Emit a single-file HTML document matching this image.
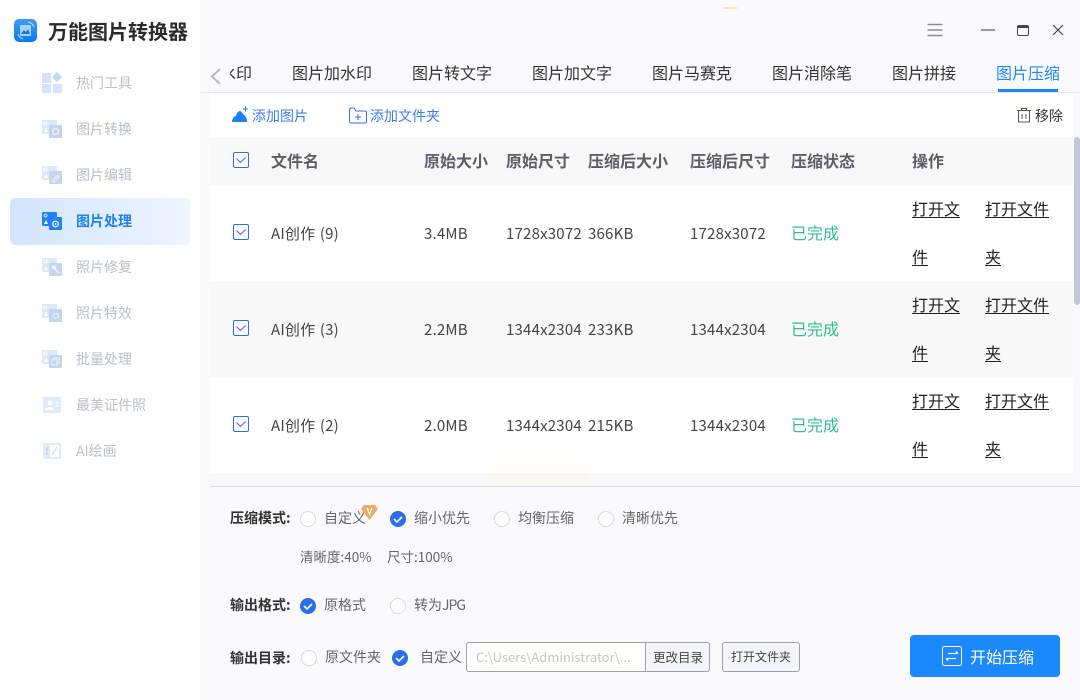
<!DOCTYPE html>
<html lang="zh"><head><meta charset="utf-8"><style>
*{box-sizing:border-box;margin:0;padding:0}
html,body{width:1080px;height:700px;overflow:hidden;background:#fafafd}
body{position:relative;font-family:"Noto Sans CJK SC","Liberation Sans",sans-serif;color:#333}
.t{position:absolute;white-space:nowrap;line-height:20px;height:20px}
.b{position:absolute}
svg{position:absolute;overflow:visible}
.side{position:absolute;left:0;top:0;width:200px;height:700px;background:#fff}
.nav{font-size:14px;color:#b9c0cb;left:76px}
.tab{font-size:16px;color:#333;top:62px}
.th{font-size:16px;font-weight:700;color:#5c5c6c;top:150px}
.td{font-size:15px;color:#444;letter-spacing:.2px;word-spacing:1px}
.ok{font-size:16px;color:#2dc08a;left:791px}
.lk{font-size:16px;color:#222;text-decoration:underline;text-underline-offset:2px}
.lab{font-size:14px;font-weight:700;color:#333;left:230px}
.opt{font-size:14px;color:#666}
.rad{position:absolute;width:16px;height:16px;border-radius:50%;border:1px solid #d9d9d9;background:#fff}
.chk{position:absolute;width:16px;height:16px;border:1px solid #2f6fe8;border-radius:2px;background:#fff;left:233px}
</style></head><body>
<div class="side"></div>
<!-- logo -->
<svg style="left:14px;top:19px" width="23" height="23" viewBox="0 0 23 23">
<defs><linearGradient id="g" x1="0" y1="0" x2="0" y2="1"><stop offset="0" stop-color="#3d9cf0"/><stop offset="1" stop-color="#0a7bf5"/></linearGradient></defs>
<rect width="23" height="23" rx="5" fill="url(#g)"/>
<rect x="6" y="6" width="11" height="11" rx="1" fill="#a8d3fa"/>
<path d="M7 15l3-4 2 2 2-3 2 5z" fill="#1d75d6"/>
<path d="M4 15a8 8 0 0 0 5 5M14 3a8 8 0 0 1 6 5" stroke="#cfe6fc" fill="none"/>
</svg>
<div class="t" style="left:48px;top:18px;height:26px;line-height:26px;font-size:20px;font-weight:700;color:#2b2b2b">万能图片转换器</div>
<!-- active -->
<div class="b" style="left:10px;top:198px;width:180px;height:47px;border-radius:5px;background:linear-gradient(90deg,#d3e5fd,#eef5fe)"></div>
<!-- nav icons -->
<svg style="left:42px;top:72px" width="20" height="21" viewBox="0 0 20 21"><rect y="1" width="9" height="10" fill="#d3e5fb"/><path d="M15 0l5 5-5 5-5-5z" fill="#c3d8f2"/><rect y="12" width="9" height="9" fill="#d3e5fb"/><rect x="11" y="12" width="9" height="9" fill="#d3e5fb"/></svg>
<svg style="left:42px;top:120px" width="20" height="18" viewBox="0 0 20 18"><rect width="15" height="14" rx="1" fill="#dbe9fb"/><rect x="7" y="5" width="13" height="13" rx="1" fill="#c5d6ec"/><circle cx="3.5" cy="3.5" r="1.5" fill="none" stroke="#fff" stroke-width=".8"/><path d="M2 12l2-4 2 4z" fill="#fff"/><circle cx="13.5" cy="11.500" r="3" fill="none" stroke="#eef4fb" stroke-width="1.200"/></svg>
<svg style="left:42px;top:166px" width="20" height="18" viewBox="0 0 20 18"><rect width="15" height="14" rx="1" fill="#dbe9fb"/><rect x="7" y="5" width="13" height="13" rx="1" fill="#c5d6ec"/><circle cx="3.5" cy="3.5" r="1.5" fill="none" stroke="#fff" stroke-width=".8"/><path d="M2 12l2-4 2 4z" fill="#fff"/><path d="M10.500 14.500l5-5 1.500 1.500-5 5h-1.500z" fill="none" stroke="#eef4fb"/></svg>
<svg style="left:42px;top:212px" width="20" height="18" viewBox="0 0 20 18"><rect width="15" height="14" rx="1" fill="#1e84f5"/><rect x="7" y="5" width="13" height="13" rx="1" fill="#1e84f5"/><circle cx="3.500" cy="3.500" r="1.500" fill="none" stroke="#fff" stroke-width=".8"/><path d="M2 12l2-4 2 4z" fill="#fff"/><circle cx="13.500" cy="12" r="2.800" fill="none" stroke="#fff" stroke-width="1.200"/><circle cx="13.500" cy="12" r=".9" fill="#fff"/></svg>
<svg style="left:42px;top:258px" width="20" height="18" viewBox="0 0 20 18"><rect width="15" height="14" rx="1" fill="#dbe9fb"/><rect x="7" y="5" width="13" height="13" rx="1" fill="#c5d6ec"/><circle cx="3.500" cy="3.500" r="1.500" fill="none" stroke="#fff" stroke-width=".8"/><path d="M2 12l2-4 2 4z" fill="#fff"/><circle cx="12" cy="9.500" r="2" fill="#eef4fb"/><path d="M13 11l4 4" stroke="#eef4fb" stroke-width="1.500"/></svg>
<svg style="left:42px;top:304px" width="20" height="18" viewBox="0 0 20 18"><rect width="15" height="14" rx="1" fill="#dbe9fb"/><rect x="7" y="5" width="13" height="13" rx="1" fill="#c5d6ec"/><circle cx="3.500" cy="3.500" r="1.500" fill="none" stroke="#fff" stroke-width=".8"/><path d="M2 12l2-4 2 4z" fill="#fff"/><circle cx="13.500" cy="12" r="2.500" fill="none" stroke="#eef4fb" stroke-width="1.500" stroke-dasharray="2 1"/></svg>
<svg style="left:42px;top:350px" width="20" height="18" viewBox="0 0 20 18"><rect width="15" height="14" rx="1" fill="#dbe9fb"/><rect x="7" y="5" width="13" height="13" rx="1" fill="#c5d6ec"/><circle cx="3.500" cy="3.500" r="1.500" fill="none" stroke="#fff" stroke-width=".8"/><path d="M2 12l2-4 2 4z" fill="#fff"/><rect x="10" y="10" width="5" height="5" fill="none" stroke="#eef4fb"/><path d="M12 10V8h5v5h-2" fill="none" stroke="#eef4fb"/></svg>
<svg style="left:43px;top:397px" width="18" height="16" viewBox="0 0 18 16"><rect width="18" height="16" fill="#deecfd"/><circle cx="7" cy="6" r="2.500" fill="#fff"/><path d="M2 13c1-4 8-4 9 0z" fill="#fff"/><path d="M13 6h3M13 9h3" stroke="#fff"/></svg>
<svg style="left:43px;top:443px" width="18" height="16" viewBox="0 0 18 16"><rect width="18" height="16" rx="1" fill="#deecfd"/><rect x="7" y="2" width="9" height="12" rx="1" fill="#fff"/><path d="M9 12l5-8" stroke="#c9dcf3"/><path d="M4 4v3M4 9v3M3 7h2" stroke="#b7cee9"/></svg>
<div class="t nav" style="top:73px">热门工具</div>
<div class="t nav" style="top:119px">图片转换</div>
<div class="t nav" style="top:165px">图片编辑</div>
<div class="t nav" style="top:211px;color:#1e80f2;font-weight:700">图片处理</div>
<div class="t nav" style="top:257px">照片修复</div>
<div class="t nav" style="top:303px">照片特效</div>
<div class="t nav" style="top:349px">批量处理</div>
<div class="t nav" style="top:395px">最美证件照</div>
<div class="t nav" style="top:441px">AI绘画</div>

<!-- window controls -->
<div class="b" style="left:724px;top:7px;width:13px;height:2px;background:#fbe3b5"></div>
<svg style="left:927px;top:23px" width="16" height="14"><path d="M.5 1.500h15M.5 7h15M.5 12.500h15" stroke="#8d8d8d" stroke-width="1.500"/></svg>
<div class="b" style="left:981px;top:29px;width:14px;height:2px;background:#999"></div>
<div class="b" style="left:1017px;top:25px;width:12px;height:11px;border:1.500px solid #444;border-top-width:3px;border-radius:2px"></div>
<svg style="left:1052px;top:24px" width="12" height="12"><path d="M1 1l10 10M11 1L1 11" stroke="#444" stroke-width="1.200"/></svg>

<!-- tabs -->
<svg style="left:209px;top:67px" width="14" height="19"><path d="M11 2L3 9.500l8 7.500" fill="none" stroke="#bbb" stroke-width="2"/></svg>
<div class="b" style="left:200px;top:92px;width:880px;height:1px;background:#e8e8ee"></div>
<div class="b" style="left:230px;top:59px;width:22px;height:26px;overflow:hidden"><div class="t tab" style="left:-10px;top:3px">水印</div></div>
<div class="t tab" style="left:292px">图片加水印</div>
<div class="t tab" style="left:412px">图片转文字</div>
<div class="t tab" style="left:532px">图片加文字</div>
<div class="t tab" style="left:652px">图片马赛克</div>
<div class="t tab" style="left:772px">图片消除笔</div>
<div class="t tab" style="left:892px">图片拼接</div>
<div class="t tab" style="left:996px;color:#1e88f5">图片压缩</div>
<div class="b" style="left:998px;top:89px;width:60px;height:3px;background:#1e88f5"></div>

<!-- toolbar + table -->
<div class="b" style="left:210px;top:93px;width:863px;height:393px;background:#fff"></div>
<svg style="left:232px;top:106px" width="16" height="17"><path d="M0 16c0-3 2-6 4-6 1-4 3-5 4-5 2 1 3 3 4 4 2 1 3 4 3 7z" fill="#1e80f2"/><path d="M11 3h5M13.500.5v5" stroke="#1e80f2"/></svg>
<div class="t" style="left:252px;top:106px;font-size:14px;color:#3f7cf0">添加图片</div>
<svg style="left:349px;top:107px" width="18" height="17"><path d="M.5 4V2.500a1.500 1.500 0 0 1 1.500-1.500h3l2 3h9a1.500 1.500 0 0 1 1.500 1.500v9a1.500 1.500 0 0 1-1.500 1.500h-14a1.500 1.500 0 0 1-1.500-1.500z" fill="none" stroke="#2f72ea"/><path d="M6 10h6M9 7v6" stroke="#2f72ea"/></svg>
<div class="t" style="left:370px;top:106px;font-size:14px;color:#3f7cf0">添加文件夹</div>
<svg style="left:1017px;top:108px" width="14" height="15"><path d="M0 2.500h14M4.500 2V.5h5V2M1.500 3v11h11V3M5 6v5M9 6v5" fill="none" stroke="#555570"/></svg>
<div class="t" style="left:1035px;top:106px;font-size:14px;color:#333">移除</div>

<div class="b" style="left:210px;top:137px;width:863px;height:48px;background:#f8f8f8"></div>
<div class="b" style="left:210px;top:281px;width:863px;height:96px;background:#f8f8f8"></div>
<div class="b" style="left:210px;top:473px;width:863px;height:13px;background:#f8f8f8"></div>
<div class="b" style="left:488px;top:457px;width:100px;height:29px;background:rgba(255,250,210,.1)"></div>
<div class="b" style="left:1074px;top:137px;width:6px;height:168px;background:#c2c8dc;border-radius:3px"></div>
<div class="b" style="left:210px;top:486px;width:870px;height:1px;background:#d3dbe8"></div>

<div class="chk" style="top:152px"></div><svg style="left:236px;top:157px" width="10" height="7"><path d="M.5 1.500l4 4 5-5" fill="none" stroke="#2f6fe8"/></svg>
<div class="t th" style="left:271px">文件名</div>
<div class="t th" style="left:424px">原始大小</div>
<div class="t th" style="left:506px">原始尺寸</div>
<div class="t th" style="left:588px">压缩后大小</div>
<div class="t th" style="left:690px">压缩后尺寸</div>
<div class="t th" style="left:791px">压缩状态</div>
<div class="t th" style="left:912px">操作</div>

<!-- row 1 -->
<div class="chk" style="top:224px"></div><svg style="left:236px;top:229px" width="10" height="7"><path d="M.5 1.500l4 4 5-5" fill="none" stroke="#2f6fe8"/></svg>
<div class="t td" style="left:271px;top:224px">AI创作 (9)</div>
<div class="t td" style="left:424px;top:224px">3.4MB</div>
<div class="t td" style="left:506px;top:224px">1728x3072</div>
<div class="t td" style="left:588px;top:224px">366KB</div>
<div class="t td" style="left:690px;top:224px">1728x3072</div>
<div class="t ok" style="top:222px">已完成</div>
<div class="t lk" style="left:912px;top:198px">打开文</div>
<div class="t lk" style="left:912px;top:246px">件</div>
<div class="t lk" style="left:985px;top:198px">打开文件</div>
<div class="t lk" style="left:985px;top:246px">夹</div>

<!-- row 2 -->
<div class="chk" style="top:320px"></div><svg style="left:236px;top:325px" width="10" height="7"><path d="M.5 1.500l4 4 5-5" fill="none" stroke="#2f6fe8"/></svg>
<div class="t td" style="left:271px;top:320px">AI创作 (3)</div>
<div class="t td" style="left:424px;top:320px">2.2MB</div>
<div class="t td" style="left:506px;top:320px">1344x2304</div>
<div class="t td" style="left:588px;top:320px">233KB</div>
<div class="t td" style="left:690px;top:320px">1344x2304</div>
<div class="t ok" style="top:318px">已完成</div>
<div class="t lk" style="left:912px;top:294px">打开文</div>
<div class="t lk" style="left:912px;top:342px">件</div>
<div class="t lk" style="left:985px;top:294px">打开文件</div>
<div class="t lk" style="left:985px;top:342px">夹</div>

<!-- row 3 -->
<div class="chk" style="top:416px"></div><svg style="left:236px;top:421px" width="10" height="7"><path d="M.5 1.500l4 4 5-5" fill="none" stroke="#2f6fe8"/></svg>
<div class="t td" style="left:271px;top:416px">AI创作 (2)</div>
<div class="t td" style="left:424px;top:416px">2.0MB</div>
<div class="t td" style="left:506px;top:416px">1344x2304</div>
<div class="t td" style="left:588px;top:416px">215KB</div>
<div class="t td" style="left:690px;top:416px">1344x2304</div>
<div class="t ok" style="top:414px">已完成</div>
<div class="t lk" style="left:912px;top:390px">打开文</div>
<div class="t lk" style="left:912px;top:438px">件</div>
<div class="t lk" style="left:985px;top:390px">打开文件</div>
<div class="t lk" style="left:985px;top:438px">夹</div>

<!-- options -->
<div class="t lab" style="top:508px">压缩模式:</div>
<div class="rad" style="left:300px;top:511px"></div>
<div class="t opt" style="left:324px;top:508px">自定义</div>
<svg style="left:361px;top:505px" width="17" height="15"><path d="M3 0h11l3 4-8.500 11L0 4z" fill="#eeaa6a"/><path d="M6 3l2.500 6L11 3" fill="none" stroke="#fff" stroke-width="1.300"/></svg>
<svg style="left:390px;top:511px" width="16" height="16"><circle cx="8" cy="8" r="8" fill="#2a6fe8"/><path d="M4 8l3 3 5-5" fill="none" stroke="#fff" stroke-width="1.600"/></svg>
<div class="t opt" style="left:414px;top:508px">缩小优先</div>
<div class="rad" style="left:494px;top:511px"></div>
<div class="t opt" style="left:518px;top:508px">均衡压缩</div>
<div class="rad" style="left:598px;top:511px"></div>
<div class="t opt" style="left:622px;top:508px">清晰优先</div>
<div class="t opt" style="left:300px;top:546px;font-size:13.500px">清晰度:40%</div>
<div class="t opt" style="left:387px;top:546px;font-size:13.500px">尺寸:100%</div>

<div class="t lab" style="top:595px">输出格式:</div>
<svg style="left:300px;top:598px" width="16" height="16"><circle cx="8" cy="8" r="8" fill="#2a6fe8"/><path d="M4 8l3 3 5-5" fill="none" stroke="#fff" stroke-width="1.600"/></svg>
<div class="t opt" style="left:324px;top:595px">原格式</div>
<div class="rad" style="left:390px;top:598px"></div>
<div class="t opt" style="left:414px;top:595px">转为<span style="letter-spacing:-1px">JPG</span></div>

<div class="t lab" style="top:648px">输出目录:</div>
<div class="rad" style="left:301px;top:650px"></div>
<div class="t opt" style="left:325px;top:647px">原文件夹</div>
<svg style="left:392px;top:650px" width="16" height="16"><circle cx="8" cy="8" r="8" fill="#2a6fe8"/><path d="M4 8l3 3 5-5" fill="none" stroke="#fff" stroke-width="1.600"/></svg>
<div class="t opt" style="left:420px;top:647px">自定义</div>
<div class="b" style="left:466px;top:642px;width:180px;height:30px;border:1px solid #a09eb0;border-right:0;border-radius:3px 0 0 3px;background:#fff"></div>
<div class="t" style="left:476px;top:647px;font-size:13px;color:#c4c4c4">C:\Users\Administrator\...</div>
<div class="b" style="left:645px;top:642px;width:65px;height:30px;border:1px solid #a09eb0;border-radius:0 3px 3px 0;background:#f4f5f9"></div>
<div class="t" style="left:653px;top:647px;font-size:12.500px;color:#444">更改目录</div>
<div class="b" style="left:722px;top:642px;width:78px;height:30px;border:1px solid #a09eb0;border-radius:3px;background:#f4f5f9"></div>
<div class="t" style="left:731px;top:647px;font-size:12px;color:#444">打开文件夹</div>

<div class="b" style="left:910px;top:635px;width:150px;height:42px;border-radius:4px;background:#1b88fb"></div>
<svg style="left:942px;top:646px" width="20" height="20"><rect x=".5" y=".5" width="19" height="19" rx="2" fill="none" stroke="#fff"/><path d="M6 7.500h10M14 5.500l2 2M14 12.500H4M6 14.500l-2-2" fill="none" stroke="#fff" stroke-width="1.300"/></svg>
<div class="t" style="left:970px;top:646px;font-size:16px;color:#fff">开始压缩</div>
</body></html>
